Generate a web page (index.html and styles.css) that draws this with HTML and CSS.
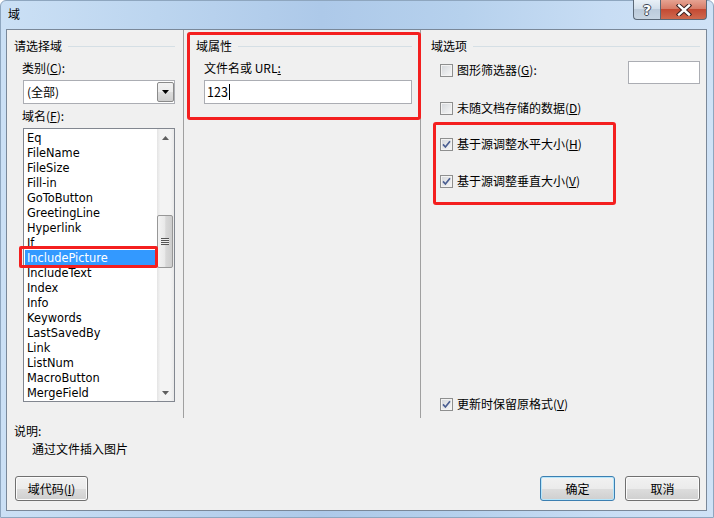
FILE: index.html
```html
<!DOCTYPE html>
<html lang="zh-CN">
<head>
<meta charset="utf-8">
<title>域</title>
<link rel="stylesheet" href="styles.css">
</head>
<body>
<div class="window">
  <div class="titlebar">
    <span class="title">域</span>
    <div class="caption-buttons">
      <div class="cap-btn help">?</div>
      <div class="cap-btn close">
        <svg width="16" height="12" viewBox="0 0 16 12"><path d="M3 1.5 L13 10.5 M13 1.5 L3 10.5" stroke="#3a2020" stroke-width="4.4" stroke-linecap="square" fill="none"/><path d="M3 1.5 L13 10.5 M13 1.5 L3 10.5" stroke="#ffffff" stroke-width="2.4" stroke-linecap="square" fill="none"/></svg>
      </div>
    </div>
  </div>
  <div class="client">
    <div class="panes">
      <section class="pane pane-left">
        <div class="group-head"><span>请选择域</span></div>
        <div class="field-label">类别(<u>C</u>):</div>
        <div class="combo">
          <span class="combo-text">(全部)</span>
          <span class="combo-btn"><svg width="7" height="4" viewBox="0 0 7 4"><path d="M0 0 H7 L3.5 4 Z" fill="#000"/></svg></span>
        </div>
        <div class="field-label">域名(<u>F</u>):</div>
        <div class="listbox">
          <ul class="items">
            <li>Eq</li>
            <li>FileName</li>
            <li>FileSize</li>
            <li>Fill-in</li>
            <li>GoToButton</li>
            <li>GreetingLine</li>
            <li>Hyperlink</li>
            <li>If</li>
            <li class="selected">IncludePicture</li>
            <li>IncludeText</li>
            <li>Index</li>
            <li>Info</li>
            <li>Keywords</li>
            <li>LastSavedBy</li>
            <li>Link</li>
            <li>ListNum</li>
            <li>MacroButton</li>
            <li>MergeField</li>
          </ul>
          <div class="scrollbar">
            <div class="sb-arrow"><svg width="7" height="4" viewBox="0 0 7 4"><path d="M0 4 H7 L3.5 0 Z" fill="#5f5f5f"/></svg></div>
            <div class="sb-thumb"><span class="grip"></span></div>
            <div class="sb-arrow sb-down"><svg width="7" height="4" viewBox="0 0 7 4"><path d="M0 0 H7 L3.5 4 Z" fill="#5f5f5f"/></svg></div>
          </div>
        </div>
      </section>
      <section class="pane pane-mid">
        <div class="mark mark-props">
          <div class="group-head"><span>域属性</span></div>
          <div class="field-label">文件名或 URL<u>:</u></div>
          <div class="textbox"><span>123</span><span class="caret"></span></div>
        </div>
      </section>
      <section class="pane pane-right">
        <div class="group-head"><span>域选项</span></div>
        <div class="opt-row first">
          <label class="check"><span class="cb"></span><span class="cb-text">图形筛选器(<u>G</u>):</span></label>
          <div class="small-input"></div>
        </div>
        <label class="check row-2"><span class="cb"></span><span class="cb-text">未随文档存储的数据(<u>D</u>)</span></label>
        <div class="mark mark-scale">
          <label class="check"><span class="cb"><svg width="11" height="11" viewBox="0 0 11 11"><path d="M2 5.4 L4.4 8 L9 2.3" stroke="#4b5f92" stroke-width="1.7" fill="none"/></svg></span><span class="cb-text">基于源调整水平大小(<u>H</u>)</span></label>
          <label class="check row-4"><span class="cb"><svg width="11" height="11" viewBox="0 0 11 11"><path d="M2 5.4 L4.4 8 L9 2.3" stroke="#4b5f92" stroke-width="1.7" fill="none"/></svg></span><span class="cb-text">基于源调整垂直大小(<u>V</u>)</span></label>
        </div>
        <label class="check row-last"><span class="cb"><svg width="11" height="11" viewBox="0 0 11 11"><path d="M2 5.4 L4.4 8 L9 2.3" stroke="#4b5f92" stroke-width="1.7" fill="none"/></svg></span><span class="cb-text">更新时保留原格式(<u>V</u>)</span></label>
      </section>
    </div>
    <div class="desc">
      <div class="desc-title">说明:</div>
      <div class="desc-text">通过文件插入图片</div>
    </div>
    <div class="footer">
      <button class="btn btn-code">域代码(<u>I</u>)</button>
      <div class="spacer"></div>
      <button class="btn btn-default">确定</button>
      <button class="btn">取消</button>
    </div>
  </div>
  <div class="bottom-frame"></div>
</div>
</body>
</html>
```
FILE: styles.css
```css
* { box-sizing: border-box; }
html, body { margin: 0; padding: 0; }
body {
  width: 714px;
  height: 518px;
  overflow: hidden;
  background: #ffffff;
  font-family: "Noto Sans CJK SC", "Microsoft YaHei", sans-serif;
  font-size: 12px;
  color: #000;
}
u { text-decoration: underline; text-underline-offset: 1px; }

.window {
  width: 714px;
  height: 518px;
  display: flex;
  flex-direction: column;
  border: 1px solid #8ea6bf;
  border-radius: 6px 6px 0 0;
  background: linear-gradient(to right, #cbe0f5 0%, #bcd5ef 22%, #adc9e9 45%, #b6d1ed 65%, #c8ddf4 85%, #cfe2f6 100%);
}

.titlebar {
  height: 28px;
  flex: none;
  display: flex;
  justify-content: space-between;
  align-items: flex-start;
}
.title {
  margin: 5px 0 0 7px;
  line-height: 16px;
  font-size: 12px;
}
.caption-buttons {
  display: flex;
  margin: -1px 6px 0 0;
}
.cap-btn {
  height: 20px;
  border: 1px solid #5b6877;
  border-top: none;
  display: flex;
  align-items: center;
  justify-content: center;
}
.help {
  width: 27px;
  border-right: none;
  border-radius: 0 0 0 4px;
  background: linear-gradient(#e9f0f7 0%, #d3dfeb 45%, #bccbdb 50%, #c7d5e3 100%);
  font-family: "DejaVu Sans", sans-serif;
  font-weight: bold;
  font-size: 14px;
  color: #ffffff;
  text-shadow: 1px 0 0 #3b4654, -1px 0 0 #3b4654, 0 1px 0 #3b4654, 0 -1px 0 #3b4654;
}
.close {
  width: 47px;
  border-radius: 0 0 4px 0;
  background: linear-gradient(#e6a392 0%, #d77c68 45%, #c44a33 50%, #cf6a4f 100%);
}

.client {
  flex: none;
  height: 482px;
  margin: 0 6px 0 5px;
  border: 1px solid #7a8899;
  background: #f0f0f0;
  display: flex;
  flex-direction: column;
}
.bottom-frame { flex: 1; }

.panes {
  height: 388px;
  display: flex;
  flex: none;
}
.pane {
  display: flex;
  flex-direction: column;
}
.pane-left {
  width: 177px;
  border-right: 1px solid #a0a0a0;
  padding: 8px 0 0 7px;
}
.pane-mid {
  width: 237px;
  border-right: 1px solid #a0a0a0;
}
.pane-right {
  flex: 1;
  padding: 8px 6px 6px 10px;
}

.group-head {
  display: flex;
  align-items: center;
  height: 16px;
  line-height: 16px;
  white-space: nowrap;
}
.group-head::after {
  content: "";
  flex: 1;
  border-top: 1px solid #d5dfe5;
  margin-left: 6px;
}
.pane-left .group-head { margin-right: 8px; }

.field-label {
  margin: 6px 0 0 8px;
  height: 16px;
  line-height: 16px;
}
.pane-left .field-label + .listbox { margin-top: 4px; }
.combo + .field-label { margin-top: 4px; }

.combo {
  margin: 4px 0 0 9px;
  width: 152px;
  height: 24px;
  border: 1px solid #abadb3;
  background: #fff;
  display: flex;
  align-items: flex-start;
}
.combo-text {
  flex: 1;
  padding-left: 3px;
  line-height: 22px;
}
.combo-btn {
  width: 17px;
  height: 20px;
  margin-top: 1px;
  border: 1px solid #8a8a8a;
  border-radius: 2px;
  background: linear-gradient(#f2f2f2 0%, #ebebeb 50%, #dddddd 51%, #cfcfcf 100%);
  display: flex;
  align-items: center;
  justify-content: center;
}

.listbox {
  margin-left: 9px;
  width: 152px;
  height: 274px;
  border: 1px solid #828790;
  background: #fff;
  display: flex;
}
.items {
  list-style: none;
  margin: 0;
  padding: 1px 0 0 0;
  width: 133px;
  font-family: "DejaVu Sans", sans-serif;
  font-size: 11.4px;
}
.items li {
  height: 15px;
  line-height: 16px;
  margin-left: 1px;
  width: 130px;
  padding-left: 2px;
  white-space: nowrap;
}
.items li.selected {
  position: relative;
  background: #3399ff;
  color: #fff;
}
.items li.selected::after {
  content: "";
  position: absolute;
  left: -6px;
  right: -3px;
  top: -4px;
  bottom: -3px;
  border: 3px solid #f41f1f;
  border-radius: 2px;
  z-index: 2;
}
.scrollbar {
  width: 17px;
  display: flex;
  flex-direction: column;
  background: linear-gradient(to right, #e4e4e4 0%, #f3f3f3 20%, #f3f3f3 80%, #e9e9e9 100%);
}
.sb-arrow {
  height: 17px;
  display: flex;
  align-items: center;
  justify-content: center;
  flex: none;
}
.sb-down { margin-top: auto; }
.sb-thumb {
  margin-top: 69px;
  width: 16px;
  height: 53px;
  border: 1px solid #979797;
  border-radius: 2px;
  background: linear-gradient(to right, #f3f3f3 0%, #e8e8e8 50%, #d8d8d8 55%, #cdcdcd 100%);
  display: flex;
  align-items: center;
  justify-content: center;
}
.grip {
  width: 8px;
  height: 7px;
  background: repeating-linear-gradient(#555 0 1px, #eee 1px 2px);
}

.mark-props {
  margin: 2px 0 0 3px;
  width: 234px;
  height: 88px;
  border: 3px solid #f41f1f;
  border-radius: 3px;
  padding: 3px 6px 0 6px;
  display: flex;
  flex-direction: column;
}
.textbox {
  margin: 4px 0 0 8px;
  width: 208px;
  height: 24px;
  border: 1px solid #abadb3;
  background: #fff;
  padding-left: 2px;
  line-height: 22px;
  font-size: 12.5px;
  display: flex;
  align-items: center;
}
.caret {
  display: inline-block;
  width: 1px;
  height: 16px;
  background: #000;
  margin-left: 1px;
}

.check {
  display: flex;
  align-items: center;
  gap: 4px;
  height: 16px;
  line-height: 16px;
  white-space: nowrap;
}
.cb-text { display: block; }
.cb {
  width: 13px;
  height: 13px;
  flex: none;
  border: 1px solid #8e8f8f;
  background: linear-gradient(135deg, #d3d6da 0%, #f8f8f8 100%);
  box-shadow: inset 0 0 0 1px #f3f3f3;
  display: flex;
  align-items: center;
  justify-content: center;
}
.opt-row.first {
  margin: 7px 0 0 9px;
  height: 23px;
  display: flex;
  align-items: flex-start;
  justify-content: space-between;
}
.opt-row.first .check { margin-top: 1px; }
.small-input {
  width: 72px;
  height: 23px;
  border: 1px solid #abadb3;
  background: #fff;
}
.row-2 { margin: 16px 0 0 9px; }
.mark-scale {
  margin: 6px 0 0 2px;
  width: 183px;
  height: 83px;
  border: 3px solid #f41f1f;
  border-radius: 3px;
  padding: 11px 0 0 4px;
}
.row-4 { margin-top: 21px; }
.row-last { margin: auto 0 0 9px; }

.desc {
  margin-top: 5px;
  padding-left: 7px;
  line-height: 16px;
}
.desc-text {
  margin-top: 2px;
  padding-left: 18px;
}

.footer {
  margin-top: 19px;
  display: flex;
  gap: 10px;
  padding: 0 6px 0 8px;
}
.spacer { flex: 1; }
.btn {
  height: 25px;
  width: 75px;
  padding: 0;
  border: 1px solid #707070;
  border-radius: 3px;
  background: linear-gradient(#f2f2f2 0%, #ebebeb 50%, #dddddd 51%, #cfcfcf 100%);
  box-shadow: inset 0 0 0 1px #fcfcfc;
  font-family: "Noto Sans CJK SC", "Microsoft YaHei", sans-serif;
  font-size: 12px;
  color: #000;
  line-height: 23px;
}
.btn-code { width: 73px; }
.btn-default {
  border-color: #3c7fb1;
  box-shadow: inset 0 0 0 1px #b6e6fb;
}
```
